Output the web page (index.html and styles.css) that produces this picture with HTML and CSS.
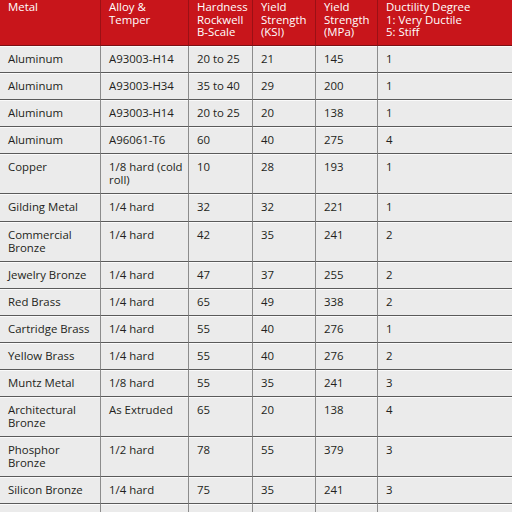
FILE: index.html
```html
<!DOCTYPE html>
<html>
<head>
<meta charset="utf-8">
<link rel="stylesheet" href="styles.css">
</head>
<body>
<table class="metals">
  <colgroup>
    <col class="c1"><col class="c2"><col class="c3"><col class="c4"><col class="c5"><col class="c6">
  </colgroup>
  <thead>
    <tr>
      <th>Metal</th>
      <th>Alloy &amp;<br>Temper</th>
      <th>Hardness<br>Rockwell<br>B-Scale</th>
      <th>Yield<br>Strength<br>(KSI)</th>
      <th>Yield<br>Strength<br>(MPa)</th>
      <th>Ductility Degree<br>1: Very Ductile<br>5: Stiff</th>
    </tr>
  </thead>
  <tbody>
    <tr><td>Aluminum</td><td>A93003-H14</td><td>20 to 25</td><td>21</td><td>145</td><td>1</td></tr>
    <tr><td>Aluminum</td><td>A93003-H34</td><td>35 to 40</td><td>29</td><td>200</td><td>1</td></tr>
    <tr><td>Aluminum</td><td>A93003-H14</td><td>20 to 25</td><td>20</td><td>138</td><td>1</td></tr>
    <tr><td>Aluminum</td><td>A96061-T6</td><td>60</td><td>40</td><td>275</td><td>4</td></tr>
    <tr><td>Copper</td><td>1/8 hard (cold<br>roll)</td><td>10</td><td>28</td><td>193</td><td>1</td></tr>
    <tr><td>Gilding Metal</td><td>1/4 hard</td><td>32</td><td>32</td><td>221</td><td>1</td></tr>
    <tr><td>Commercial<br>Bronze</td><td>1/4 hard</td><td>42</td><td>35</td><td>241</td><td>2</td></tr>
    <tr><td>Jewelry Bronze</td><td>1/4 hard</td><td>47</td><td>37</td><td>255</td><td>2</td></tr>
    <tr><td>Red Brass</td><td>1/4 hard</td><td>65</td><td>49</td><td>338</td><td>2</td></tr>
    <tr><td>Cartridge Brass</td><td>1/4 hard</td><td>55</td><td>40</td><td>276</td><td>1</td></tr>
    <tr><td>Yellow Brass</td><td>1/4 hard</td><td>55</td><td>40</td><td>276</td><td>2</td></tr>
    <tr><td>Muntz Metal</td><td>1/8 hard</td><td>55</td><td>35</td><td>241</td><td>3</td></tr>
    <tr><td>Architectural<br>Bronze</td><td>As Extruded</td><td>65</td><td>20</td><td>138</td><td>4</td></tr>
    <tr><td>Phosphor<br>Bronze</td><td>1/2 hard</td><td>78</td><td>55</td><td>379</td><td>3</td></tr>
    <tr><td>Silicon Bronze</td><td>1/4 hard</td><td>75</td><td>35</td><td>241</td><td>3</td></tr>
    <tr><td>&nbsp;</td><td>&nbsp;</td><td>&nbsp;</td><td>&nbsp;</td><td>&nbsp;</td><td>&nbsp;</td></tr>
  </tbody>
</table>
</body>
</html>
```
FILE: styles.css
```css
html, body {
  margin: 0;
  padding: 0;
  background: #ebebeb;
  overflow: hidden;
}
.metals {
  border-collapse: separate;
  border-spacing: 0;
  table-layout: fixed;
  width: 540px;
  font-family: "Open Sans", "Noto Sans", sans-serif;
  font-size: 11.4px;
  color: #231f20;
}
.c1 { width: 100px; }
.c2 { width: 88px; }
.c3 { width: 64px; }
.c4 { width: 63px; }
.c5 { width: 62px; }
.c6 { width: 163px; }
.metals th {
  background: #c8151b;
  color: #fff;
  font-weight: normal;
  text-align: left;
  vertical-align: top;
  line-height: 12.5px;
  padding: 1px 8px 6.5px 8px;
  height: 37.5px;
  border-left: 1px solid #9b1015;
  border-bottom: 1px solid #7a1014;
}
.metals th:first-child, .metals td:first-child { border-left: none; }
.metals td {
  text-align: left;
  vertical-align: top;
  line-height: 13px;
  padding: 6px 8px 7.1px 8px;
  border-left: 1px solid #8c8c8c;
  border-bottom: 1px solid #5a5a5a;
  box-shadow: inset 0 1px 0 #fafafa;
  white-space: nowrap;
}
```
